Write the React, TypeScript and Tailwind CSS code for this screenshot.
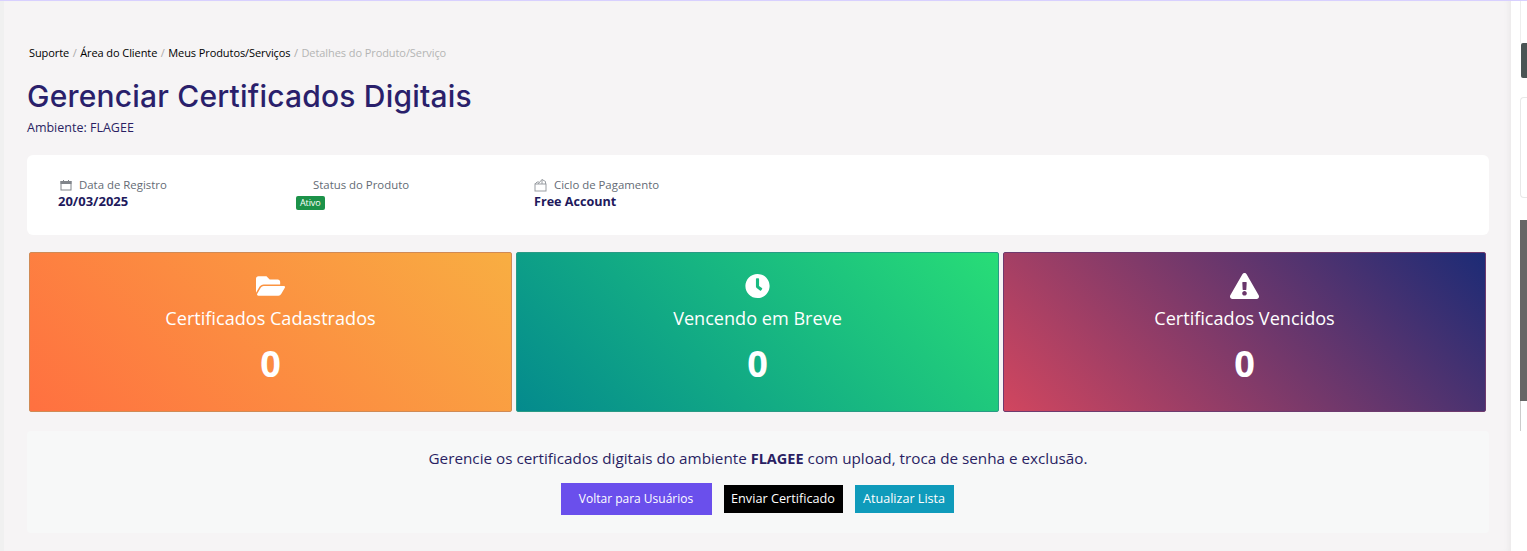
import { FaFolderOpen, FaClock, FaExclamationTriangle } from "react-icons/fa";

const cards = [
  { title: "Certificados Cadastrados", Icon: FaFolderOpen, cls: "bg-[linear-gradient(45deg,#ff7040,#f8ae42)] border-[#d08a55]", icon: "w-[29px] h-[26px]" },
  { title: "Vencendo em Breve", Icon: FaClock, cls: "bg-[linear-gradient(45deg,#048a8d,#28dd77)] border-[#2a9a85]", icon: "w-[25px] h-[26px]" },
  { title: "Certificados Vencidos", Icon: FaExclamationTriangle, cls: "bg-[linear-gradient(45deg,#d1465f,#1c2b76)] border-[#6e3a6e]", icon: "w-[29px] h-[26px]" },
];

function CalIcon() {
  return (
    <svg viewBox="0 0 12 12" className="w-[12px] h-[12px] text-[#80848a]" fill="none" stroke="currentColor" strokeWidth="1">
      <rect x="1" y="2.5" width="10" height="8.5" />
      <rect x="1" y="2.5" width="10" height="2" fill="currentColor" />
      <path d="M3.5 1v2M8.5 1v2" />
    </svg>
  );
}

function CycleIcon() {
  return (
    <svg viewBox="0 0 13 14" className="w-[13px] h-[14px] text-[#9a9ea3]" fill="none" stroke="currentColor" strokeWidth="1">
      <rect x="1" y="6" width="11" height="7" />
      <path d="M4 6l4-4.5 3.5 2V6" />
      <path d="M8 1.5V6M1 6l2-2h2" />
    </svg>
  );
}

export default function App() {
  return (
    <div className="h-[551px] w-[1527px] overflow-hidden bg-white flex flex-col font-['Open_Sans','Noto_Sans',sans-serif]">
      <div className="h-px bg-[#d8d0ff] shrink-0" />
      <div className="flex flex-1 min-h-0">
        <div className="w-[4px] bg-[#f0f0f0] shrink-0" />
        <main className="w-[1507px] shrink-0 bg-[#f6f4f5] pl-[23px] pr-[22px] pt-[44px] shadow-[inset_-6px_0_6px_-4px_rgba(0,0,0,0.05)]">
          <nav className="text-[11px] leading-[16px] tracking-[-0.08px] text-[#000] pl-[2px] flex gap-[3.5px]">
            <span>Suporte</span><span className="text-[#aaa]">/</span>
            <span>Área do Cliente</span><span className="text-[#aaa]">/</span>
            <span>Meus Produtos/Serviços</span><span className="text-[#aaa]">/</span>
            <span className="text-[#b4b4b4]">Detalhes do Produto/Serviço</span>
          </nav>
          <h1 className="mt-[16px] text-[30px] leading-[38px] font-medium tracking-[0.2px] text-[#2a1f6b] font-['Inter',sans-serif]">
            Gerenciar Certificados Digitais
          </h1>
          <p className="mt-[4px] text-[12.5px] leading-[17px] text-[#2a1f63]">Ambiente: FLAGEE</p>
          <section className="mt-[19px] h-[80px] bg-white rounded-[6px] flex pt-[22px] pl-[31px]">
            <div className="w-[238px]">
              <div className="flex items-center gap-[7px] text-[11.4px] leading-[16px] text-[#646b75] pl-[2px]">
                <CalIcon /><span>Data de Registro</span>
              </div>
              <div className="text-[13px] leading-[16px] font-bold text-[#21195c]">20/03/2025</div>
            </div>
            <div className="w-[238px]">
              <div className="text-[11.4px] leading-[16px] text-[#646b75] pl-[17px]">Status do Produto</div>
              <div className="flex w-fit items-center h-[14px] px-[4px] mt-[3px] rounded-[2px] bg-[#1c9249] text-white text-[9px] tracking-[-0.1px]">Ativo</div>
            </div>
            <div>
              <div className="flex items-center gap-[7px] h-[16px] text-[11.4px] leading-[16px] text-[#646b75]">
                <CycleIcon /><span>Ciclo de Pagamento</span>
              </div>
              <div className="mt-px text-[12.6px] leading-[16px] font-bold text-[#21195c]">Free Account</div>
            </div>
          </section>
          <section className="mt-[17px] pl-[2px] pr-[3px] grid grid-cols-3 gap-[4px]">
            {cards.map(({ title, Icon, cls, icon }) => (
              <div key={title} className={`h-[160px] rounded-[2px] border flex flex-col items-center pt-[20px] text-white ${cls}`}>
                <Icon className={icon} />
                <div className="mt-[5px] text-[18.1px] leading-[28px]">{title}</div>
                <div className="mt-[8px] text-[36px] leading-[48px] font-bold">0</div>
              </div>
            ))}
          </section>
          <section className="mt-[19px] h-[102px] bg-[#f7f8f8] rounded-[4px] flex flex-col items-center pt-[17px]">
            <p className="text-[15.25px] leading-[20px] text-[#2a1f63]">
              Gerencie os certificados digitais do ambiente <b className="font-bold text-[14.5px]">FLAGEE</b> com upload, troca de senha e exclusão.
            </p>
            <div className="mt-[14px] mr-[2px] flex items-center gap-[12px] text-white">
              <button className="h-[32px] w-[151px] bg-[#6a4fec] text-[12px]">Voltar para Usuários</button>
              <button className="h-[28px] w-[119px] bg-black text-[12.7px]">Enviar Certificado</button>
              <button className="h-[28px] w-[99px] bg-[#0f9bbb] text-[12.6px]">Atualizar Lista</button>
            </div>
          </section>
        </main>
        <aside className="flex-1 min-w-0 pl-[9px] flex flex-col">
          <div className="h-[42px] border-l border-[#eeeeee]" />
          <div className="h-[35px] ml-px bg-[#4a5454] rounded-l-[2px]" />
          <div className="mt-[19px] h-[101px] border border-r-0 border-[#e8e8e8] rounded-l-[4px]" />
          <div className="mt-[22px] h-[181px] bg-[#666666]" />
          <div className="h-[30px] w-px bg-[#cccccc]" />
        </aside>
      </div>
    </div>
  );
}
